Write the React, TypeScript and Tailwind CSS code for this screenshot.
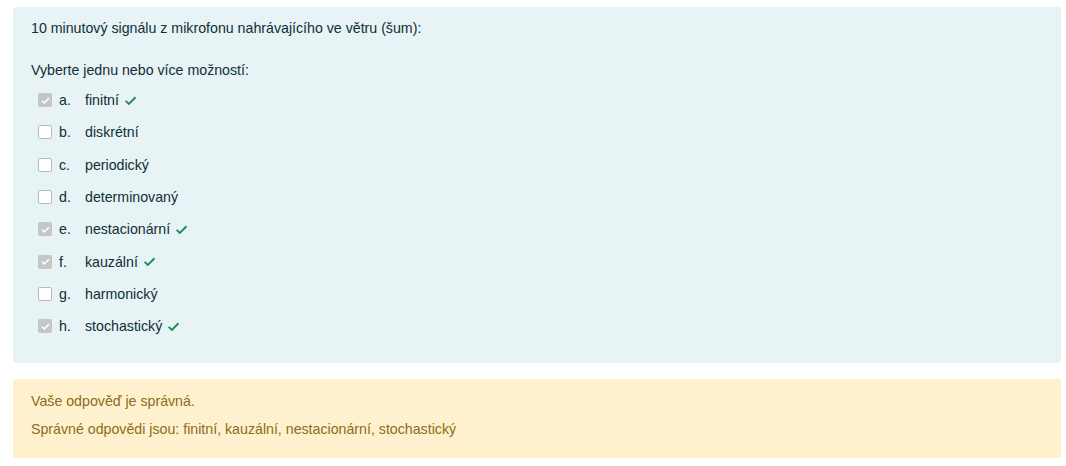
import React from "react";

const options = [
  { l: "a.", t: "finitní", c: true },
  { l: "b.", t: "diskrétní", c: false },
  { l: "c.", t: "periodický", c: false },
  { l: "d.", t: "determinovaný", c: false },
  { l: "e.", t: "nestacionární", c: true },
  { l: "f.", t: "kauzální", c: true },
  { l: "g.", t: "harmonický", c: false },
  { l: "h.", t: "stochastický", c: true },
];

function Box({ checked }: { checked: boolean }) {
  if (checked) {
    return (
      <span className="flex h-[14px] w-[14px] items-center justify-center rounded-[2px] bg-[#c4c6c8]">
        <svg viewBox="0 0 12 12" className="h-[11px] w-[11px]">
          <path d="M2.2 6.2 L4.8 8.6 L9.8 3.4" fill="none" stroke="#ffffff" strokeWidth="1.6" />
        </svg>
      </span>
    );
  }
  return <span className="h-[14px] w-[14px] rounded-[2px] border border-[#b9bcbf] bg-white" />;
}

function Tick() {
  return (
    <svg viewBox="0 0 12 12" className="ml-[5px] h-[13px] w-[13px]">
      <path d="M1.5 6.3 L4.5 9.2 L10.6 3" fill="none" stroke="#1a8a5c" strokeWidth="1.7" />
    </svg>
  );
}

export default function App() {
  return (
    <div className="bg-white pl-[13px] pr-[5px] pt-[7px] pb-[9px] text-[14.2px] leading-[20px] font-['Liberation_Sans',Arial,sans-serif]">
      <div className="rounded-[3px] bg-[#e7f3f5] px-[18px] pt-[11px] pb-[21px] text-[#102f36]">
        <div>10 minutový signálu z mikrofonu nahrávajícího ve větru (šum):</div>
        <div className="mt-[22px]">Vyberte jednu nebo více možností:</div>
        <div className="mt-[4px] flex flex-col">
          {options.map((o) => (
            <div key={o.l} className="flex h-[32.3px] items-center pl-[7px]">
              <Box checked={o.c} />
              <span className="ml-[7px] w-[26px]">{o.l}</span>
              <span>{o.t}</span>
              {o.c && <Tick />}
            </div>
          ))}
        </div>
      </div>
      <div className="mt-[16px] rounded-[3px] bg-[#fff1cd] px-[18px] pt-[12px] pb-[19px] text-[#8c6c20]">
        <div>Vaše odpověď je správná.</div>
        <div className="mt-[8px]">Správné odpovědi jsou: finitní, kauzální, nestacionární, stochastický</div>
      </div>
    </div>
  );
}
